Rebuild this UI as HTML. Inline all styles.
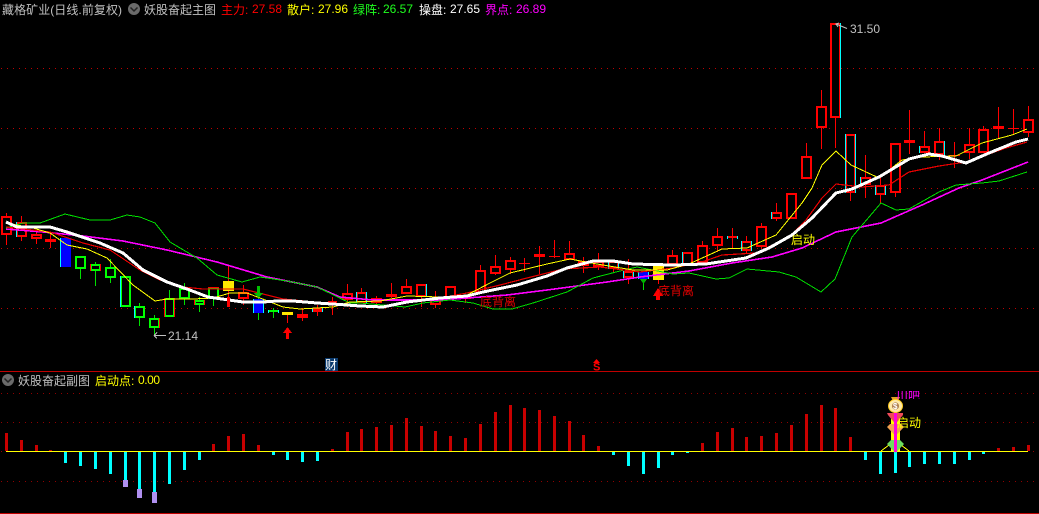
<!DOCTYPE html>
<html><head><meta charset="utf-8"><style>
html,body{margin:0;padding:0;background:#000;width:1039px;height:514px;overflow:hidden}
svg{display:block}
text{font-family:"WenQuanYi Zen Hei","Liberation Sans","Noto Sans CJK SC",sans-serif;font-size:12px}
</style></head><body>
<svg width="1039" height="514" viewBox="0 0 1039 514" xmlns="http://www.w3.org/2000/svg">
<rect width="1039" height="514" fill="#000"/>
<!-- grid -->
<g stroke="#c00000" stroke-width="1" stroke-dasharray="1 5" shape-rendering="crispEdges">
<path d="M1 68.5H1039M1 128.5H1039M1 188.5H1039M1 248.5H1039M1 308.5H1039"/>
</g>
<g stroke="#900000" stroke-width="1" stroke-dasharray="1 5" shape-rendering="crispEdges">
<path d="M1 393.5H1039M1 422.5H1039M1 481.5H1039M1 451.5H1039"/>
</g>
<path d="M0 371.5H1039M0 513.5H1039" stroke="#c00000" stroke-width="1" shape-rendering="crispEdges"/>

<!-- wicks -->
<g shape-rendering="crispEdges" stroke-width="1" fill="none">
<path stroke="#ff0000" d="M6.5 213V245M21.5 216V241M36.5 232V244M50.5 233V248M228.5 266V307M243.5 285V305M287.5 315V323M302.5 308V321M317.5 305V316M332.5 297V315M347.5 284V307M361.5 288V303M376.5 296V308M391.5 283V298M406.5 279V294M421.5 284V307M435.5 291V308M450.5 286V298M465.5 296V303M480.5 265V293M495.5 255V275M510.5 257V274M524.5 258V272M539.5 246V274M554.5 240V258M569.5 241V260M583.5 257V273M598.5 253V270M613.5 261V273M628.5 259V284M658.5 280V284M672.5 250V265M687.5 252V265M702.5 241V263M717.5 228V252M732.5 228V248M746.5 236V254M761.5 223V249M776.5 203V221M791.5 193V219M806.5 143V179M821.5 90V149M835.5 23V148M850.5 134V201M865.5 155V198M880.5 176V203M895.5 143V197M909.5 110V154M924.5 131V153M939.5 128V160M954.5 142V168M969.5 128V159M983.5 126V153M998.5 107V138M1013.5 109V135M1028.5 106V137"/>
<path stroke="#00e000" d="M80.5 269V279M95.5 262V286M110.5 259V283M139.5 303V326M154.5 315V335M169.5 290V317M184.5 283V305M199.5 297V312M213.5 287V306M258.5 286V320M273.5 308V318M643.5 279V290"/>
</g>

<!-- candle bodies -->
<g shape-rendering="crispEdges" fill="#000" stroke-width="2">
<path stroke="#ff0000" d="M2 217h9v17h-9zM17 223h9v13h-9zM32 235h9v3h-9zM46 240h9v1h-9zM239 293h9v5h-9zM298 315h9v2h-9zM313 309h9v2h-9zM328 302h9v0h-9zM343 294h9v5h-9zM357 293h9v9h-9zM372 299h9v3h-9zM387 295h9v1h-9zM402 287h9v6h-9zM417 285h9v11h-9zM431 300h9v4h-9zM446 287h9v10h-9zM461 297h9v1h-9zM476 271h9v21h-9zM491 267h9v6h-9zM506 261h9v8h-9zM535 255h9v1h-9zM565 254h9v5h-9zM579 262h9v3h-9zM594 262h9v4h-9zM609 262h9v6h-9zM624 272h9v5h-9zM668 256h9v8h-9zM683 253h9v11h-9zM698 246h9v16h-9zM713 237h9v8h-9zM728 237h9v0h-9zM742 242h9v8h-9zM757 227h9v19h-9zM772 213h9v5h-9zM787 194h9v24h-9zM802 157h9v21h-9zM817 107h9v20h-9zM831 24h9v93h-9zM846 135h9v57h-9zM861 178h9v6h-9zM876 186h9v8h-9zM891 144h9v48h-9zM905 141h9v1h-9zM920 147h9v5h-9zM935 142h9v12h-9zM965 145h9v7h-9zM979 130h9v22h-9zM994 127h9v1h-9zM1024 120h9v12h-9z"/>
<path stroke="#00ff00" d="M76 257h9v11h-9zM91 265h9v5h-9zM106 268h9v9h-9zM121 277h9v29h-9zM135 307h9v10h-9zM150 319h9v8h-9zM165 299h9v17h-9zM180 289h9v9h-9zM195 301h9v3h-9zM209 288h9v10h-9zM269 311h9v0h-9z"/>
</g>
<path shape-rendering="crispEdges" stroke="#ff0000" stroke-width="1" d="M519 263.5H530M549 256.5H560M949 155.5H960M1008 128.5H1019" fill="none"/>
<path shape-rendering="crispEdges" stroke="#ff0000" stroke-width="1" d="M90.5 264V271M100.5 264V271M159.5 318V328M164.5 298V317M174.5 298V317M194.5 300V305M204.5 300V305M208 287.5H219" fill="none"/>
<!-- filled bodies -->
<g shape-rendering="crispEdges">
<rect x="60" y="238" width="11" height="29" fill="#0000ff"/>
<rect x="253" y="299" width="11" height="14" fill="#0000ff"/>
<rect x="638" y="272" width="11" height="7" fill="#0000ff"/>
<rect x="223" y="281" width="11" height="10" fill="#ffe800"/>
<rect x="282" y="312" width="11" height="3" fill="#ffe800"/>
<rect x="653" y="266" width="11" height="14" fill="#ffe800"/>
</g>
<!-- cyan edges -->
<path shape-rendering="crispEdges" stroke="#00ffff" stroke-width="1" fill="none" d="M16.5 222V237M60.5 238V267M120.5 276V307M134.5 306V318M253.5 299V313M263.5 299V313M268.5 310V313M278.5 310V313M312.5 308V312M322.5 308V312M356.5 292V303M366.5 292V303M426.5 284V297M608.5 261V269M618.5 261V269M623.5 271V278M633.5 271V278M638.5 272V279M648.5 272V279M682.5 252V265M727.5 236V239M737.5 236V239M741.5 241V251M751.5 241V251M771.5 212V219M840.5 23V118M845.5 134V193M855.5 134V193M860.5 177V185M875.5 185V195M885.5 185V195M919.5 146V153M944.5 141V155"/>

<!-- MA lines -->
<g fill="none" stroke-linejoin="round" shape-rendering="crispEdges">
<path stroke="#ff00ff" stroke-width="1.6" d="M6 229L43 232L83 236L123 241L167 250L217 262L267 277L317 287L340 297L373 300L440 300L507 295L547 290L607 282L640 277L689 271L732 263L772 257L802 248L836 232L881 223L922 205L959 188L982 180L1028 162"/>
<path stroke="#00e000" stroke-width="1" d="M6 228L23 223L40 223L65 214L90 220L110 220L127 215L140 217L155 223L170 242L197 258L217 275L242 282L260 277L287 281L317 287L350 303L360 303L383 305L405 307L423 303L450 300L473 303L493 309L512 309L533 303L567 292L593 278L620 271L637 267L673 274L689 273L716 279L729 278L747 269L779 272L796 277L821 292L835 279L852 237L881 203L896 210L909 209L939 192L956 185L982 183L999 181L1027 172"/>
<path stroke="#e80000" stroke-width="1.2" d="M6 227L50 232L83 243L110 250L140 270L160 280L183 287L203 289L243 289L283 299L347 305L383 306L440 298L467 293L500 285L527 278L563 269L600 267L640 272L673 268L702 262L722 255L756 253L789 237L806 220L822 198L836 184L862 187L889 185L909 172L939 166L966 162L1006 148L1027 142"/>
<path stroke="#ffff00" stroke-width="1" d="M6 223L33 228L50 233L67 245L87 249L107 258L133 285L155 301L167 299L193 299L213 298L230 293L247 293L260 298L283 307L300 309L333 307L350 302L380 301L407 296L440 297L467 295L490 283L510 273L547 264L570 259L597 264L633 270L667 270L689 264L722 249L747 248L776 235L802 203L812 188L822 165L836 151L851 165L879 178L902 160L922 157L956 156L982 143L1012 135L1027 129"/>
<path stroke="#ffffff" stroke-width="3" d="M6 222L17 227L50 227L67 232L100 243L123 253L143 270L167 282L187 289L208 297L243 302L263 302L277 301L293 301L317 303L347 305L360 306L383 307L407 302L440 298L467 296L483 292L517 285L547 276L567 268L593 261L613 261L633 264L673 265L706 264L746 258L769 248L792 235L812 218L836 193L852 189L879 177L909 159L929 154L942 156L966 163L989 153L1016 142L1028 139"/>
</g>

<!-- arrows / markers -->
<g shape-rendering="crispEdges">
<polygon fill="#00c000" points="257,286 260,286 260,293 263,293 258.5,298 254,293 257,293"/>
<polygon fill="#ff0000" points="287.5,327 292,333 289,333 289,339 286,339 286,333 283,333"/>
<rect x="227" y="297" width="3" height="10" fill="#ff0000"/>
<polygon fill="#00b000" points="640,279 647,279 643.5,284"/>
<polygon fill="#ff0000" points="658,288 663,296 660,296 660,300 656,300 656,296 653,296"/>
</g>

<!-- low/high labels -->
<path d="M154 335.5H166M154 335.5l3-3M154 335.5l3 3" stroke="#c0c0c0" fill="none" stroke-width="1" shape-rendering="crispEdges"/>
<text x="168" y="340" fill="#c0c0c0" textLength="30">21.14</text>
<path d="M847 28.5L836 24l3-1M836 24l2 3" stroke="#c0c0c0" fill="none" stroke-width="1"/>
<text x="850" y="33" fill="#c0c0c0" textLength="30">31.50</text>

<text x="791" y="244" fill="#ffff00">启动</text>
<text x="480" y="306" fill="#e00000">底背离</text>
<text x="658" y="295" fill="#e00000">底背离</text>

<!-- 财 marker -->
<rect x="325" y="358" width="13" height="13" fill="#0a3a6e" shape-rendering="crispEdges"/>
<text x="325" y="369" fill="#ffffff">财</text>
<!-- S marker -->
<polygon points="596.5,359 600,363 593,363" fill="#ff0000"/>
<text x="593" y="370.5" fill="#ff0000" font-weight="bold" style="font-family:'Liberation Sans',sans-serif;font-size:11px">S</text>

<!-- header main -->
<text x="2" y="14" fill="#c0c0c0" textLength="120">藏格矿业(日线.前复权)</text>
<circle cx="134" cy="9" r="6" fill="#6a6a6a"/>
<path d="M130.5 7.5L134 11L137.5 7.5" stroke="#222" stroke-width="1.5" fill="none"/>
<text x="144" y="14" fill="#c0c0c0">妖股奋起主图</text>
<text x="221" y="14" fill="#ff0000">主力:</text>
<text x="252" y="13" fill="#ff0000" textLength="30">27.58</text>
<text x="287" y="14" fill="#ffff00">散户:</text>
<text x="318" y="13" fill="#ffff00" textLength="30">27.96</text>
<text x="353" y="14" fill="#1fff1f">绿阵:</text>
<text x="383" y="13" fill="#1fff1f" textLength="30">26.57</text>
<text x="419" y="14" fill="#ffffff">操盘:</text>
<text x="450" y="13" fill="#ffffff" textLength="30">27.65</text>
<text x="485" y="14" fill="#ff00ff">界点:</text>
<text x="516" y="13" fill="#ff00ff" textLength="30">26.89</text>

<!-- header sub -->
<circle cx="8" cy="380" r="6" fill="#6a6a6a"/>
<path d="M4.5 378.5L8 382L11.5 378.5" stroke="#222" stroke-width="1.5" fill="none"/>
<text x="18" y="385" fill="#c0c0c0">妖股奋起副图</text>
<text x="95" y="385" fill="#ffff00">启动点:</text>
<text x="138" y="384" fill="#ffff00" textLength="22">0.00</text>

<!-- sub bars -->
<g shape-rendering="crispEdges" fill="none" stroke-width="3">
<path stroke="#c80000" d="M6.5 433V451M21.5 440V451M36.5 445V451M50.5 450V451M213.5 444V451M228.5 436V451M243.5 434V451M258.5 445V451M332.5 449V451M347.5 432V451M361.5 429V451M376.5 427V451M391.5 425V451M406.5 418V451M421.5 426V451M435.5 431V451M450.5 436V451M465.5 438V451M480.5 424V451M495.5 412V451M510.5 405V451M524.5 408V451M539.5 410V451M554.5 416V451M569.5 421V451M583.5 435V451M598.5 446V451M702.5 443V451M717.5 432V451M732.5 428V451M746.5 437V451M761.5 436V451M776.5 433V451M791.5 425V451M806.5 414V451M821.5 405V451M835.5 408V451M850.5 437V451M998.5 448V451M1013.5 447V451M1028.5 445V451"/>
<path stroke="#00ffff" d="M65.5 452V463M80.5 452V466M95.5 452V469M110.5 452V474M125.5 452V481M139.5 452V489M154.5 452V492M169.5 452V484M184.5 452V470M199.5 452V460M273.5 452V455M287.5 452V460M302.5 452V462M317.5 452V461M613.5 452V455M628.5 452V466M643.5 452V474M658.5 452V468M672.5 452V455M687.5 452V453M865.5 452V460M880.5 452V474M895.5 452V473M909.5 452V467M924.5 452V464M939.5 452V464M954.5 452V464M969.5 452V460M983.5 452V454"/>
</g>
<g fill="#b090f0" shape-rendering="crispEdges">
<rect x="123" y="480" width="5" height="7"/>
<rect x="137" y="489" width="5" height="9"/>
<rect x="152" y="492" width="5" height="11"/>
</g>
<path d="M6 451.5H1028" stroke="#ffff00" stroke-width="1" shape-rendering="crispEdges"/>

<!-- start stack -->
<rect x="891" y="418" width="9" height="34" fill="#ffff00" shape-rendering="crispEdges"/>
<path d="M881 451L889 445M901 445L909 451" stroke="#ffff00" stroke-width="1" fill="none" shape-rendering="crispEdges"/>
<polygon points="887,413 903,413 903,415 895.5,424 888,415" fill="#f04a5a"/>
<polygon points="887,427 890,424 901,424 904,427 895.5,436" fill="#f0a050"/>
<polygon points="887,444 891,440 900,440 904,444 895.5,453" fill="#6cdc60"/>
<rect x="894" y="412" width="3" height="40" fill="#ff00e0" shape-rendering="crispEdges"/>
<path d="M891 397h9l-2 4h-5z" fill="#e0a020"/>
<ellipse cx="895.5" cy="406" rx="7" ry="6.5" fill="#ffe9a8" stroke="#ffcc20" stroke-width="1"/>
<circle cx="895.5" cy="406" r="3.6" fill="#b08050"/>
<text x="893" y="409" fill="#fff" style="font-family:'Liberation Sans',sans-serif;font-size:8px;font-weight:bold">$</text>
<clipPath id="c1"><rect x="890" y="391" width="40" height="8"/></clipPath>
<text x="896" y="400" fill="#ff00ff" style="font-size:12px" clip-path="url(#c1)">川吧</text>
<text x="897" y="427" fill="#ffff00">启动</text>
</svg>
</body></html>
